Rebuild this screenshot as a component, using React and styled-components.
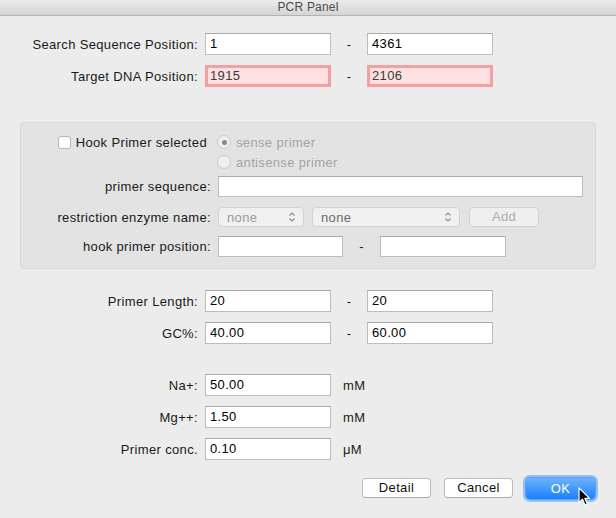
import styled, { createGlobalStyle } from 'styled-components';

const GlobalStyle = createGlobalStyle`
  html, body {
    margin: 0;
    padding: 0;
    background: #ececec;
  }
  body {
    font-family: "Liberation Sans", Arial, sans-serif;
    font-size: 13px;
    letter-spacing: 0.35px;
    color: #1a1a1a;
  }
`;

const Window = styled.div`
  width: 616px;
  height: 518px;
  background: #ececec;
  overflow: hidden;
`;

const TitleBar = styled.div`
  height: 15px;
  line-height: 15px;
  border-bottom: 1px solid #b3b3b3;
  background: linear-gradient(#ebebeb, #d5d5d5);
  text-align: center;
  font-size: 12px;
  letter-spacing: 0.2px;
  color: #4c4c4c;
`;

const Body = styled.div`
  padding-top: 17px;
`;

const Section = styled.div`
  display: flex;
  flex-direction: column;
  gap: 10px;
  margin-top: ${(p) => p.$top || 0}px;
`;

const Row = styled.div`
  display: flex;
  align-items: center;
  height: ${(p) => p.$h || 22}px;
  margin-top: ${(p) => p.$top || 0}px;
`;

const Spacer = styled.div`
  height: 10px;
`;

const Label = styled.div`
  width: ${(p) => p.$w || 198}px;
  padding-right: 7px;
  text-align: right;
  white-space: nowrap;
  flex-shrink: 0;
`;

const TextInput = styled.div`
  box-sizing: border-box;
  width: ${(p) => p.$w || 126}px;
  height: ${(p) => p.$h || 22}px;
  line-height: ${(p) => (p.$h || 22) - 2}px;
  padding-left: 4px;
  background: ${(p) => (p.$error ? '#fde0e1' : '#ffffff')};
  border: ${(p) => (p.$error ? '3px solid #f59fa0' : '1px solid #bdbdbd')};
  border-top-color: ${(p) => (p.$error ? '#f59fa0' : '#a9a9a9')};
  color: ${(p) => (p.$error ? '#3a3a3a' : '#000')};
  ${(p) => p.$error && 'line-height: 16px; padding-left: 2px;'}
  flex-shrink: 0;
`;

const Dash = styled.div`
  width: ${(p) => p.$w || 36}px;
  text-align: center;
  flex-shrink: 0;
`;

const Unit = styled.div`
  margin-left: 12px;
`;

const Group = styled.div`
  margin: 35px 20px 0 20px;
  padding: 9px 0 11px 0;
  background: #e3e3e3;
  border: 1px solid #d9d9d9;
  border-radius: 4px;
`;

const CheckRow = styled.div`
  display: flex;
  align-items: flex-start;
`;

const CheckCell = styled.label`
  width: 186px;
  padding-right: 11px;
  height: 20px;
  display: flex;
  align-items: center;
  justify-content: flex-end;
  gap: 5px;
  white-space: nowrap;
`;

const Checkbox = styled.span`
  box-sizing: border-box;
  width: 13px;
  height: 13px;
  background: #fff;
  border: 1px solid #b5b5b5;
  border-radius: 3px;
`;

const RadioStack = styled.div`
  display: flex;
  flex-direction: column;
`;

const RadioItem = styled.div`
  height: 20px;
  display: flex;
  align-items: center;
  gap: 5px;
  margin-left: -1px;
  color: #a3a3a3;
`;

const RadioCircle = styled.span`
  box-sizing: border-box;
  width: 14px;
  height: 14px;
  border-radius: 50%;
  background: #efefef;
  border: 1px solid #cacaca;
  display: flex;
  align-items: center;
  justify-content: center;
  &::after {
    content: '';
    width: 5px;
    height: 5px;
    border-radius: 50%;
    background: ${(p) => (p.$on ? '#8a8a8a' : 'transparent')};
  }
`;

const Popup = styled.div`
  box-sizing: border-box;
  width: ${(p) => p.$w}px;
  height: 20px;
  padding: 0 7px 0 8px;
  margin-right: ${(p) => p.$mr || 0}px;
  display: flex;
  align-items: center;
  justify-content: space-between;
  background: #f0f0f0;
  border: 1px solid #d2d2d2;
  border-radius: 4px;
  color: ${(p) => (p.$dim ? '#9a9a9a' : '#6a6a6a')};
  flex-shrink: 0;
`;

const DimButton = styled.div`
  box-sizing: border-box;
  width: 70px;
  height: 20px;
  line-height: 18px;
  text-align: center;
  background: #efefef;
  border: 1px solid #d2d2d2;
  border-radius: 4px;
  color: #acacac;
`;

const ButtonBar = styled.div`
  display: flex;
  justify-content: flex-end;
  gap: 13px;
  padding-right: 21px;
  margin-top: 18px;
`;

const PushButton = styled.div`
  position: relative;
  box-sizing: border-box;
  width: 69px;
  height: ${(p) => (p.$primary ? 21 : 20)}px;
  line-height: ${(p) => (p.$primary ? 21 : 18)}px;
  text-align: center;
  border-radius: 4px;
  ${(p) =>
    p.$primary
      ? `
    color: #fff;
    background: linear-gradient(#6cb2fb, #1a82fb);
    box-shadow: 0 0 0 1px #5a9ff0, 0 0 0 3px #93c1f5;
  `
      : `
    color: #111;
    background: #fff;
    border: 1px solid #bcbcbc;
    border-bottom-color: #a8a8a8;
  `}
`;

const Cursor = styled.svg`
  position: absolute;
  left: 52px;
  top: 9px;
`;

function Arrows() {
  return (
    <svg width="8" height="12" viewBox="0 0 8 12">
      <path d="M1.5 4.5 L4 2 L6.5 4.5 M1.5 7.5 L4 10 L6.5 7.5" fill="none" stroke="#8c8c8c" strokeWidth="1.1" />
    </svg>
  );
}

function RangeRow({ label, from, to, error, top }) {
  return (
    <Row $top={top}>
      <Label>{label}</Label>
      <TextInput $error={error}>{from}</TextInput>
      <Dash>-</Dash>
      <TextInput $error={error}>{to}</TextInput>
    </Row>
  );
}

function UnitRow({ label, value, unit }) {
  return (
    <Row>
      <Label>{label}</Label>
      <TextInput>{value}</TextInput>
      <Unit>{unit}</Unit>
    </Row>
  );
}

export default function App() {
  return (
    <Window>
      <GlobalStyle />
      <TitleBar>PCR Panel</TitleBar>
      <Body>
        <Section>
          <RangeRow label="Search Sequence Position:" from="1" to="4361" />
          <RangeRow label="Target DNA Position:" from="1915" to="2106" error />
        </Section>

        <Group>
          <CheckRow>
            <CheckCell>
              <Checkbox />
              Hook Primer selected
            </CheckCell>
            <RadioStack>
              <RadioItem>
                <RadioCircle $on />
                sense primer
              </RadioItem>
              <RadioItem>
                <RadioCircle />
                antisense primer
              </RadioItem>
            </RadioStack>
          </CheckRow>
          <Row $h={21} $top={4}>
            <Label $w={190}>primer sequence:</Label>
            <TextInput $w={365} $h={21} />
          </Row>
          <Row $h={20} $top={10}>
            <Label $w={190}>restriction enzyme name:</Label>
            <Popup $w={86} $mr={8} $dim>
              none
              <Arrows />
            </Popup>
            <Popup $w={148} $mr={9}>
              none
              <Arrows />
            </Popup>
            <DimButton>Add</DimButton>
          </Row>
          <Row $h={21} $top={9}>
            <Label $w={190}>hook primer position:</Label>
            <TextInput $w={125} $h={21} />
            <Dash $w={37}>-</Dash>
            <TextInput $w={126} $h={21} />
          </Row>
        </Group>

        <Section $top={21}>
          <RangeRow label="Primer Length:" from="20" to="20" />
          <RangeRow label="GC%:" from="40.00" to="60.00" />
          <Spacer />
          <UnitRow label="Na+:" value="50.00" unit="mM" />
          <UnitRow label="Mg++:" value="1.50" unit="mM" />
          <UnitRow label="Primer conc." value="0.10" unit="μM" />
        </Section>

        <ButtonBar>
          <PushButton>Detail</PushButton>
          <PushButton>Cancel</PushButton>
          <PushButton $primary>
            OK
            <Cursor width="14" height="20" viewBox="0 0 14 20">
              <path
                d="M1 1 L1 15.5 L4.5 12.2 L7 18 L9.3 17 L6.9 11.4 L11.6 11.4 Z"
                fill="#000"
                stroke="#fff"
                strokeWidth="1.2"
                strokeLinejoin="round"
              />
            </Cursor>
          </PushButton>
        </ButtonBar>
      </Body>
    </Window>
  );
}
